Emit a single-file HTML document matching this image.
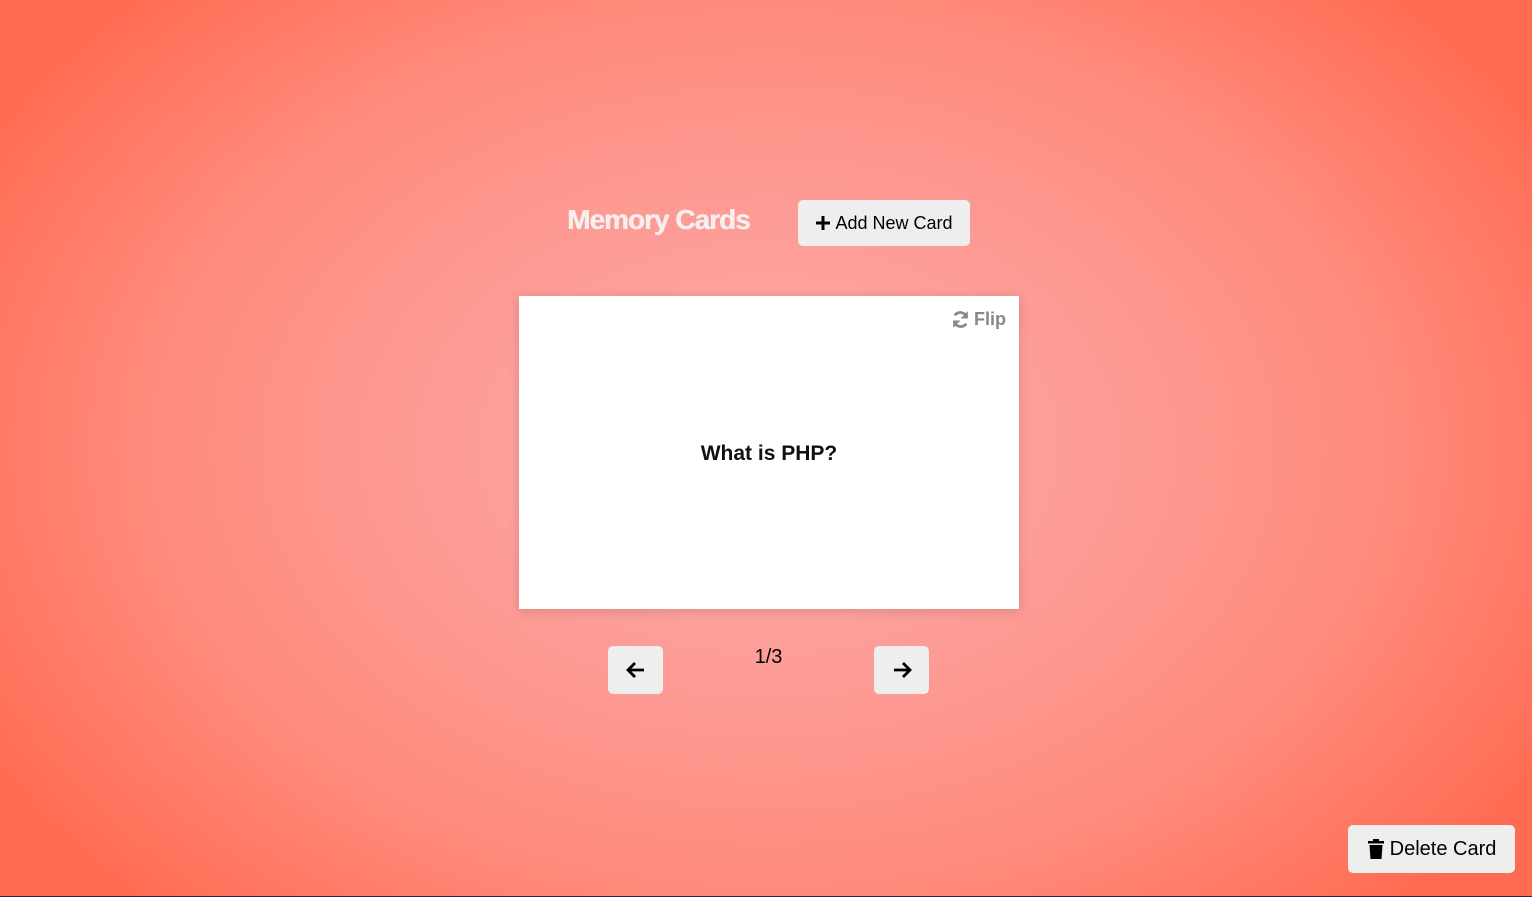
<!DOCTYPE html>
<html><head><meta charset="utf-8"><style>
html,body{margin:0;padding:0;width:1532px;height:897px;overflow:hidden}
body{background:radial-gradient(ellipse 900px 640px at 768px 448px,#ffabab 0%,#fd9a93 40%,#ff8a7b 70%,#ff6b52 100%);font-family:"Liberation Sans",Arial,sans-serif;position:relative}
.bar{position:absolute;left:0;right:0;bottom:0;height:1px;background:#3b1a5a}
h1{position:absolute;left:567px;top:204px;margin:0;font-size:28px;font-weight:bold;color:#f7eeee;letter-spacing:-1px;text-shadow:0.5px 0 0 #f7eeee}
.btn{position:absolute;background:#eeeeee;border-radius:5px;color:#000;display:flex;align-items:center;justify-content:center}
.add{left:798px;top:200px;width:172px;height:46px;font-size:18px}
.card{position:absolute;left:519px;top:296px;width:500px;height:313px;background:#fff;box-shadow:0 2px 10px rgba(0,0,0,0.15)}
.q{position:absolute;left:0;right:0;top:146px;text-align:center;font-size:21px;font-weight:bold;color:#111}
.flip{position:absolute;right:13px;top:13px;font-size:18px;font-weight:bold;color:#888;display:flex;align-items:center;gap:3px}
.prev{left:608px;top:646px;width:55px;height:48px}
.next{left:874px;top:646px;width:55px;height:48px}
.cnt{position:absolute;left:740px;width:57px;top:646px;text-align:center;font-size:20px;color:#000}
.del{left:1348px;top:825px;width:167px;height:48px;font-size:20px}
</style></head><body>
<h1>Memory Cards</h1>
<div class="btn add"><svg width="16" height="16" viewBox="0 0 16 16" style="margin-right:4px"><path d="M8 1v14M1 8h14" stroke="#000" stroke-width="3"/></svg>Add New Card</div>
<div class="card">
<div class="flip"><svg width="21" height="21" viewBox="0 0 20 20"><path d="M16 8A6.5 6.5 0 0 0 4.5 6" stroke="#888" stroke-width="2.6" fill="none"/><path d="M17 2v7h-7z" fill="#888"/><path d="M4 12a6.5 6.5 0 0 0 11.5 2" stroke="#888" stroke-width="2.6" fill="none"/><path d="M3 18v-7h7z" fill="#888"/></svg>Flip</div>
<div class="q">What is PHP?</div>
</div>
<div class="btn prev"><svg width="20" height="18" viewBox="0 0 20 18"><path d="M18 9H3M9 2L2 9l7 7" stroke="#000" stroke-width="2.8" fill="none"/></svg></div>
<div class="cnt">1/3</div>
<div class="btn next"><svg width="20" height="18" viewBox="0 0 20 18"><path d="M2 9h15M11 2l7 7-7 7" stroke="#000" stroke-width="2.8" fill="none"/></svg></div>
<div class="btn del"><svg width="18" height="22" viewBox="0 0 18 22" style="margin-right:5px"><path d="M1 3h16v2.5H1zM6 1h6v2H6z" fill="#000"/><path d="M2.5 7h13l-1 14h-11z" fill="#000"/></svg>Delete Card</div>
<div class="bar"></div>
</body></html>
